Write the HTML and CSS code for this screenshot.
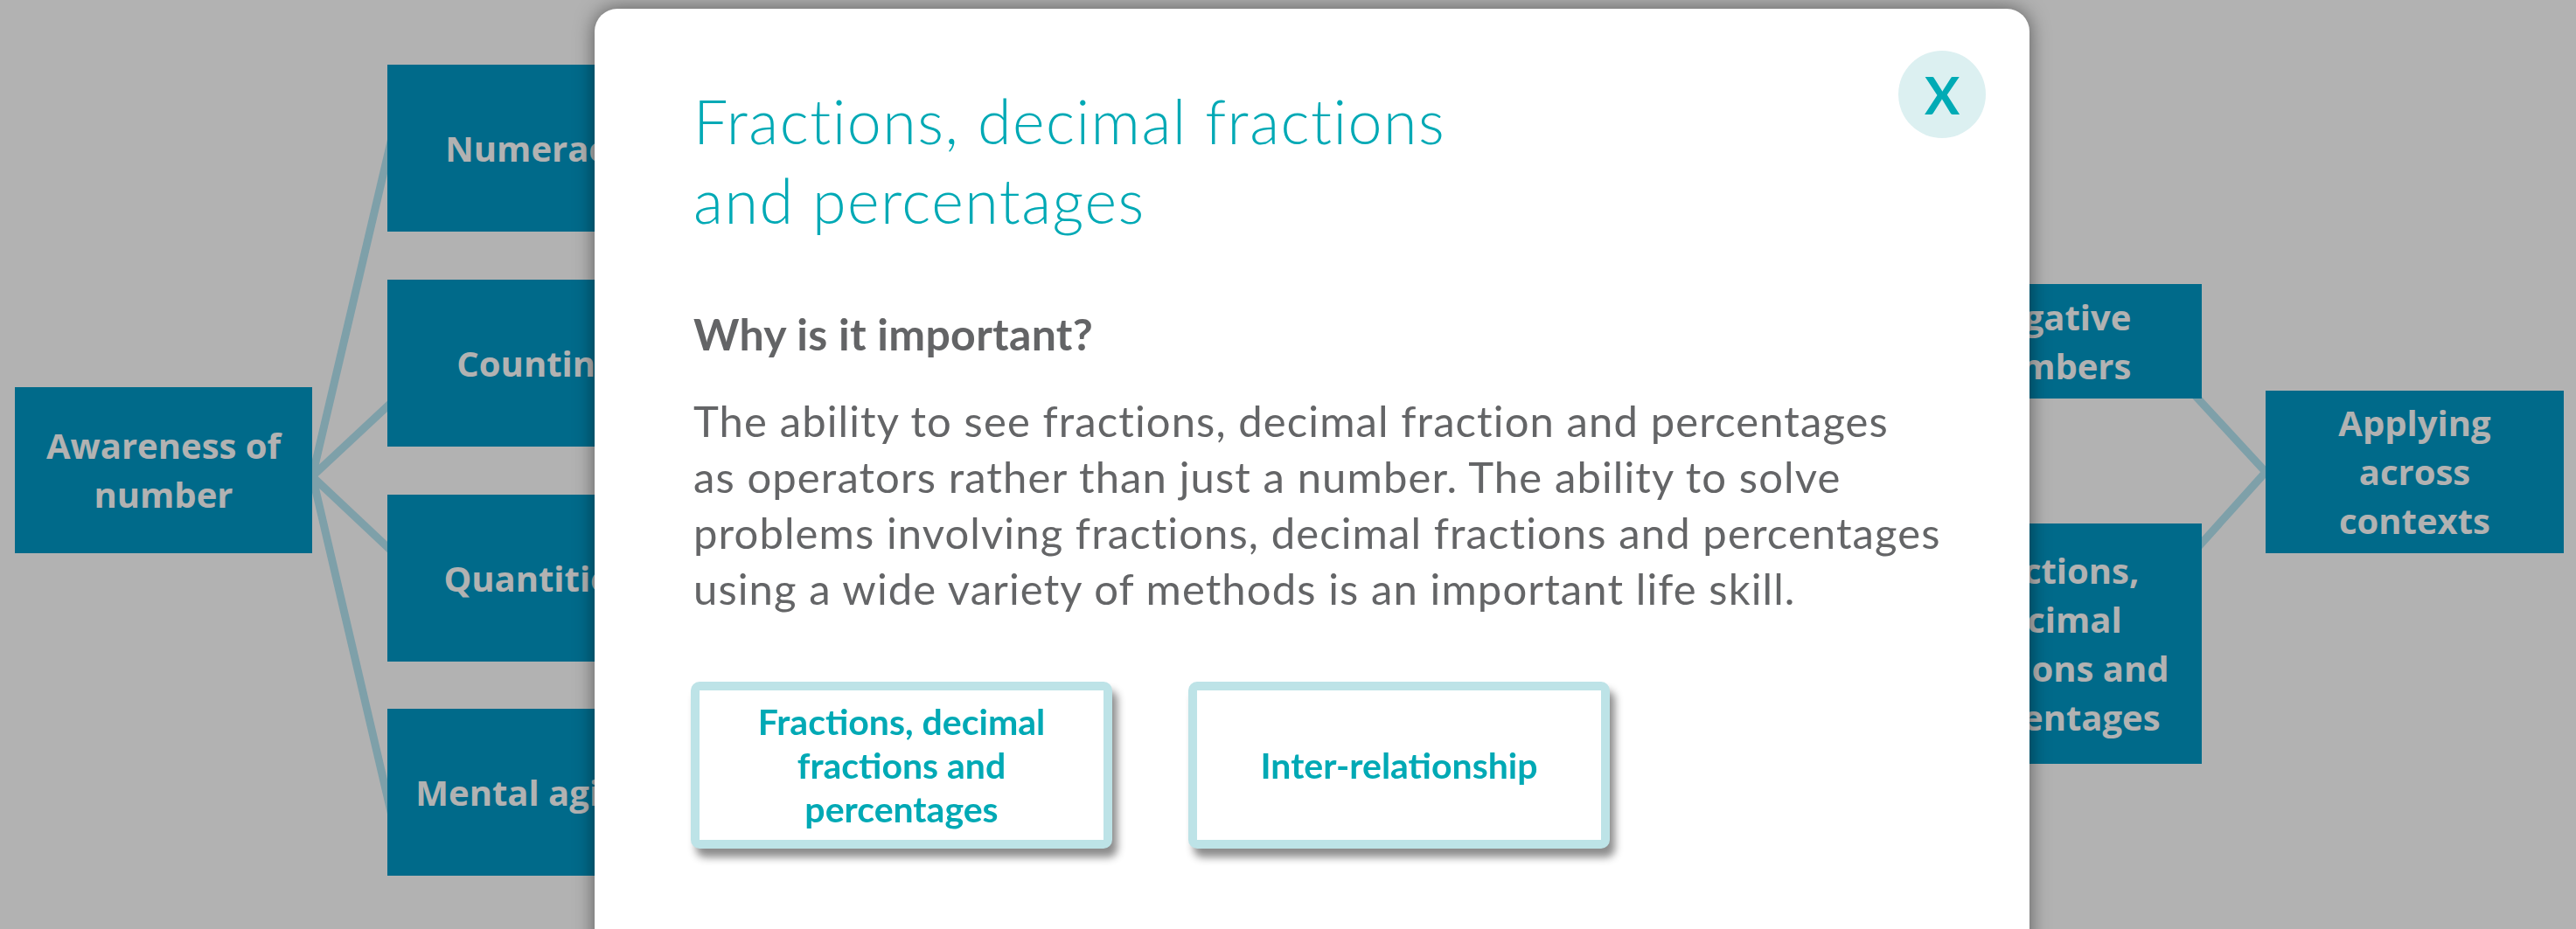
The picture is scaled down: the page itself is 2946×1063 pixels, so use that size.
FILE: index.html
```html
<!DOCTYPE html>
<html lang="en">
<head>
    <meta charset="UTF-8">
    <meta name="viewport" content="width=device-width, initial-scale=1.0">
    <title>Number progression</title>
    <link rel="stylesheet" href="styles.css">
</head>
<body>
    <div class="chart">
        <svg class="links" width="2946" height="1063" viewBox="0 0 2946 1063">
            <line x1="340" y1="618" x2="452" y2="141"/>
            <line x1="340" y1="561" x2="460" y2="449"/>
            <line x1="340" y1="529" x2="460" y2="642"/>
            <line x1="340" y1="471" x2="452" y2="950"/>
            <line x1="2603" y1="553" x2="2496" y2="437"/>
            <line x1="2602" y1="528" x2="2503" y2="638"/>
        </svg>

        <div class="node awareness">Awareness of number</div>

        <div class="node numeracy">Numeracy</div>
        <div class="node counting">Counting</div>
        <div class="node quantities">Quantities</div>
        <div class="node mental">Mental agility</div>

        <div class="node negative">Negative numbers</div>
        <div class="node fractions">Fractions, decimal fractions and percentages</div>
        <div class="node applying">Applying across contexts</div>
    </div>

    <div class="overlay"></div>

    <div class="modal">
        <button class="close" type="button">X</button>
        <h2 class="modal-title">Fractions, decimal fractions<br>and percentages</h2>
        <h3 class="modal-sub">Why is it important?</h3>
        <p class="modal-text">
            The ability to see fractions, decimal fraction and percentages<br>
            as operators rather than just a number. The ability to solve<br>
            problems involving fractions, decimal fractions and percentages<br>
            using a wide variety of methods is an important life skill.
        </p>
        <div class="topics">
            <a class="topic" href="#">Fractions, decimal fractions and percentages</a>
            <a class="topic" href="#">Inter-relationship</a>
        </div>
    </div>
</body>
</html>
```

FILE: styles.css
```css
body {
    margin: 0;
    width: 2946px;
    height: 1063px;
    overflow: hidden;
    position: relative;
    background-color: #fff;
    font-family: "Open Sans", "Liberation Sans", sans-serif;
}

/* diagram behind the dialog */
.chart {
    position: relative;
    width: 2946px;
    height: 1063px;
}
.links {
    position: absolute;
    left: 0;
    top: 0;
}
.links line {
    stroke: #b5e5f3;
    stroke-width: 9;
}
.node {
    position: absolute;
    box-sizing: border-box;
    display: flex;
    align-items: center;
    justify-content: center;
    padding: 0 20px;
    text-align: center;
    background-color: #0099c6;
    color: #fff;
    font-weight: 700;
    font-size: 40px;
    line-height: 56px;
}
.awareness { left: 17px;   top: 443px; width: 340px; height: 190px; }
.numeracy  { left: 443px;  top: 74px;  width: 340px; height: 191px; }
.counting  { left: 443px;  top: 320px; width: 340px; height: 191px; }
.quantities{ left: 443px;  top: 566px; width: 340px; height: 191px; }
.mental    { left: 443px;  top: 811px; width: 340px; height: 191px; }
.negative  { left: 2178px; top: 325px; width: 340px; height: 131px; }
.fractions { left: 2178px; top: 599px; width: 340px; height: 275px; }
.applying  { left: 2591px; top: 447px; width: 341px; height: 186px; }

.overlay {
    position: fixed;
    inset: 0;
    background-color: rgba(0, 0, 0, 0.3);
}

/* dialog */
.modal {
    position: absolute;
    left: 680px;
    top: 10px;
    width: 1641px;
    height: 1120px;
    box-sizing: border-box;
    padding: 83px 40px 0 113px;
    background-color: #fff;
    border-radius: 26px;
    box-shadow: 0 0 22px rgba(0, 0, 0, 0.5);
    font-family: Lato, "Open Sans", sans-serif;
}
.close {
    position: absolute;
    top: 48px;
    right: 50px;
    width: 100px;
    height: 100px;
    padding: 0;
    border: none;
    border-radius: 50%;
    background-color: #dcf0f1;
    color: #00abb5;
    font-family: Lato, sans-serif;
    font-weight: 700;
    font-size: 60px;
    line-height: 100px;
    cursor: pointer;
}
.modal-title {
    margin: 0;
    color: #00a9b5;
    font-weight: 300;
    font-size: 70px;
    line-height: 91px;
    letter-spacing: 1.5px;
}
.modal-sub {
    margin: 78px 0 0;
    color: #636466;
    font-weight: 700;
    font-size: 50px;
    line-height: 58px;
    letter-spacing: 0.3px;
}
.modal-text {
    margin: 38px 0 0;
    color: #646567;
    font-weight: 400;
    font-size: 49px;
    line-height: 64px;
    letter-spacing: 1.1px;
}
.topics {
    display: flex;
    gap: 87px;
    margin-top: 75px;
    margin-left: -3px;
}
.topic {
    box-sizing: border-box;
    width: 482px;
    height: 191px;
    display: flex;
    align-items: center;
    justify-content: center;
    padding: 0 30px;
    border: 10px solid #bde3e7;
    border-radius: 10px;
    background-color: #fff;
    box-shadow: 6px 10px 10px rgba(0, 0, 0, 0.45);
    color: #00a9b5;
    text-align: center;
    text-decoration: none;
    font-weight: 700;
    font-size: 41px;
    line-height: 50px;
}
```
